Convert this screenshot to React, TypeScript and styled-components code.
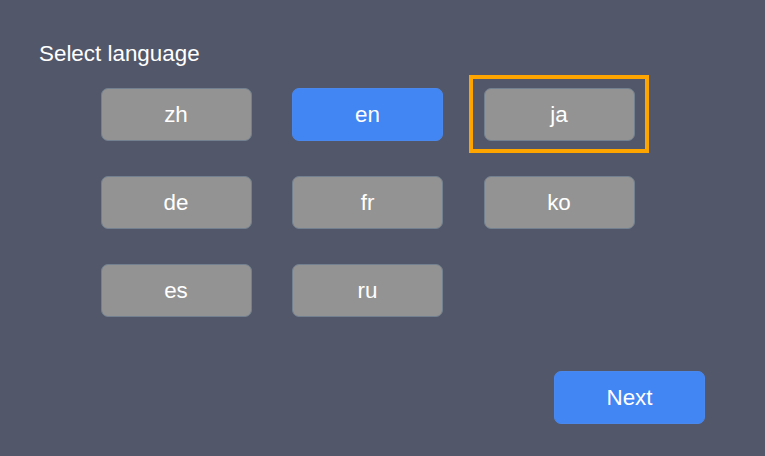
import React, { useState } from "react";
import styled, { createGlobalStyle } from "styled-components";

const GlobalStyle = createGlobalStyle`
    html, body {
        margin: 0;
        padding: 0;
        background: #525869;
        font-family: "Liberation Sans", Arial, sans-serif;
    }
`;

const languages = ["zh", "en", "ja", "de", "fr", "ko", "es", "ru"];

const App: React.FC = () => {
    const [selected] = useState("en");
    const focused = "ja";

    return (
        <>
            <GlobalStyle />
            <Screen>
                <Title>Select language</Title>
                <LanguageGrid>
                    {languages.map((lang) => (
                        <LangButton
                            key={lang}
                            $active={lang === selected}
                            $focused={lang === focused}
                        >
                            {lang}
                        </LangButton>
                    ))}
                </LanguageGrid>
                <Footer>
                    <NextButton>Next</NextButton>
                </Footer>
            </Screen>
        </>
    );
};

export default App;

const Screen = styled.div`
    box-sizing: border-box;
    width: 765px;
    height: 456px;
    padding: 41px 60px 32px 39px;
    display: flex;
    flex-direction: column;
    color: #ffffff;
`;

const Title = styled.div`
    font-size: 22.4px;
    line-height: 25px;
`;

const LanguageGrid = styled.div`
    display: grid;
    grid-template-columns: repeat(3, 151px);
    column-gap: 40.5px;
    row-gap: 35px;
    margin: 22px 0 0 61.5px;
`;

const LangButton = styled.button<{ $active?: boolean; $focused?: boolean }>`
    position: relative;
    box-sizing: border-box;
    height: 53px;
    border: 1px solid ${(p) => (p.$active ? "#4a88ee" : "#72808f")};
    border-radius: 7px;
    background: ${(p) => (p.$active ? "#4286f4" : "#939393")};
    color: #ffffff;
    font-family: "Liberation Sans", Arial, sans-serif;
    font-size: 22.4px;
    padding: 0;
    outline: none;

    &::after {
        content: "";
        display: ${(p) => (p.$focused ? "block" : "none")};
        position: absolute;
        top: -14px;
        bottom: -13px;
        left: -16px;
        right: -15px;
        border: 4px solid #ffa500;
    }
`;

const Footer = styled.div`
    margin-top: auto;
    display: flex;
    justify-content: flex-end;
`;

const NextButton = styled.button`
    box-sizing: border-box;
    width: 151px;
    height: 53px;
    border: 1px solid #4a88ee;
    border-radius: 7px;
    background: #4286f4;
    color: #ffffff;
    font-family: "Liberation Sans", Arial, sans-serif;
    font-size: 22.4px;
    padding: 0;
`;
